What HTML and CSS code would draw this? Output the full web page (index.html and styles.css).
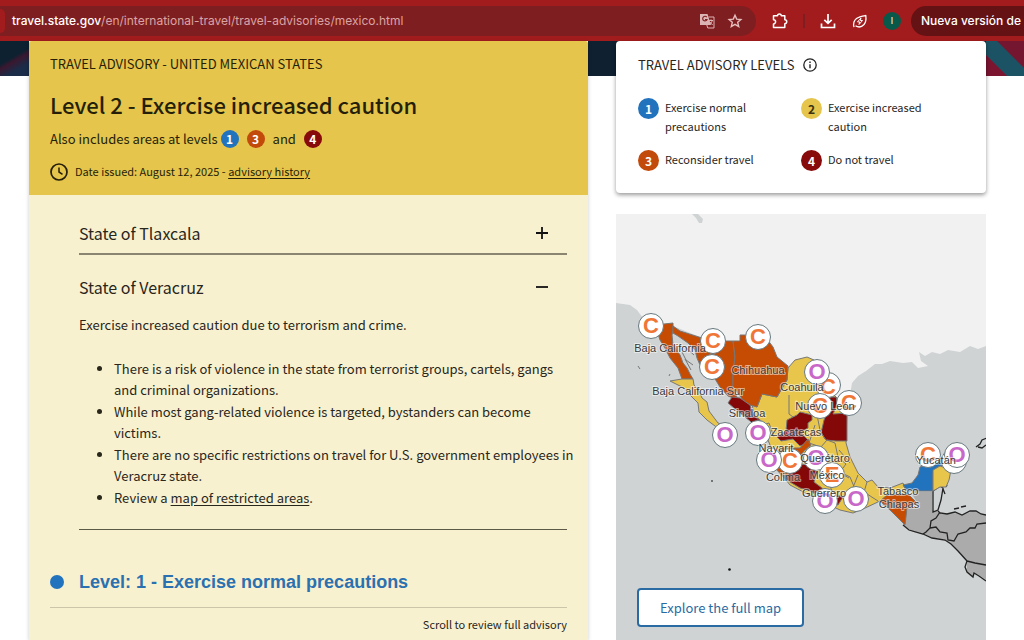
FILE: index.html
```html
<!DOCTYPE html>
<html lang="en">
<head>
<meta charset="utf-8">
<meta name="viewport" content="width=device-width, initial-scale=1">
<title>Mexico Travel Advisory</title>
<link rel="stylesheet" href="styles.css">
</head>
<body>
<header class="browser">
  <div class="omnibox">
    <span class="site-chip"></span>
    <p class="url"><strong>travel.state.gov</strong>/en/international-travel/travel-advisories/mexico.html</p>
    <button class="icon-btn" aria-label="Translate this page">
      <svg width="16" height="16" viewBox="0 0 16 16"><path d="M1 1h7.500l3.500 11H1z" fill="#dcb4b4"/><path d="M7.800 4.200a2.300 2.300 0 1 0 .3 2.300H6" fill="none" stroke="#7f1e20" stroke-width="1.100"/><path d="M9.500 4H15v11H8.800L7.800 12M10 7.500h4M12 6.300v1.200M13.200 7.500c-.4 2-1.600 3-3 4M10.800 9l2.800 3" fill="none" stroke="#dcb4b4" stroke-width="1"/></svg>
    </button>
    <button class="icon-btn" aria-label="Bookmark this page">
      <svg width="16" height="16" viewBox="0 0 16 16"><path d="M8 2.200l1.700 3.900 4.200.4-3.200 2.800 1 4.200L8 11.300l-3.700 2.200 1-4.200-3.200-2.800 4.200-.4z" fill="none" stroke="#e6bfbf" stroke-width="1.400"/></svg>
    </button>
  </div>
  <div class="tools">
    <button class="icon-btn" aria-label="Extensions">
      <svg width="18" height="18" viewBox="0 0 18 18"><path d="M2.500 3.800h4a1.900 1.900 0 0 1 3.800 0h3.500v4a1.900 1.900 0 0 1 0 3.900v3.800H2.500v-3.600a2.100 2.100 0 0 0 0-4.200z" fill="none" stroke="#fff" stroke-width="1.500" stroke-linejoin="round"/></svg>
    </button>
    <span class="divider"></span>
    <button class="icon-btn" aria-label="Downloads">
      <svg width="18" height="18" viewBox="0 0 18 18"><path d="M9 2v9M5.300 7.800L9 11.400l3.700-3.600M2.500 11.500v4h13v-4" fill="none" stroke="#fff" stroke-width="1.700"/></svg>
    </button>
    <button class="icon-btn" aria-label="Energy saver">
      <svg width="18" height="18" viewBox="0 0 18 18"><path d="M3 15.200c-1-3.700 0-6.700 2.500-8.700C8 4.500 11.500 4 14.800 3.500c.4 3.300 0 7-1.800 9-2.500 2.700-6 2.900-8.500 1.200" fill="none" stroke="#fff" stroke-width="1.300" stroke-linejoin="round"/><path d="M10 6L6.500 9.900h2.200L8 12.500l3.500-4H9.300z" fill="none" stroke="#fff" stroke-width="1" stroke-linejoin="round"/></svg>
    </button>
    <button class="avatar" aria-label="Profile">I</button>
  </div>
  <button class="update">Nueva versión de Chrome disponible</button>
</header>

<main class="page">
  <article class="advisory">
    <header class="advisory-head">
      <p class="eyebrow">TRAVEL ADVISORY - UNITED MEXICAN STATES</p>
      <h1>Level 2 - Exercise increased caution</h1>
      <p class="also">Also includes areas at levels <span class="dot l1">1</span> <span class="dot l3">3</span> <span>and</span> <span class="dot l4">4</span></p>
      <p class="issued">
        <svg width="18" height="18" viewBox="0 0 18 18"><circle cx="9" cy="9" r="8" fill="none" stroke="#251f0a" stroke-width="1.700"/><path d="M9 4.500V9l3.500 2.300" fill="none" stroke="#251f0a" stroke-width="1.500"/></svg>
        <span>Date issued: August 12, 2025 - <a href="#history">advisory history</a></span>
      </p>
    </header>
    <div class="advisory-body">
      <section class="states">
        <h2><button class="state ruled" aria-expanded="false">State of Tlaxcala
          <svg width="14" height="14" viewBox="0 0 14 14"><path d="M1 7h12M7 1v12" stroke="#111" stroke-width="1.800"/></svg></button></h2>
        <h2><button class="state" aria-expanded="true">State of Veracruz
          <svg width="14" height="14" viewBox="0 0 14 14"><path d="M1 7h12" stroke="#111" stroke-width="1.800"/></svg></button></h2>
        <div class="detail">
          <p>Exercise increased caution due to terrorism and crime.</p>
          <ul>
            <li>There is a risk of violence in the state from terrorist groups, cartels, gangs and criminal organizations.</li>
            <li>While most gang-related violence is targeted, bystanders can become victims.</li>
            <li>There are no specific restrictions on travel for U.S. government employees in Veracruz state.</li>
            <li>Review a <a href="#restricted">map of restricted areas</a>.</li>
          </ul>
        </div>
      </section>
      <h2 class="level">Level: 1 - Exercise normal precautions</h2>
      <p class="scroll">Scroll to review full advisory</p>
    </div>
  </article>

  <aside class="side">
    <section class="levels">
      <h2>TRAVEL ADVISORY LEVELS
        <svg width="14" height="14" viewBox="0 0 14 14"><circle cx="7" cy="7" r="6.200" fill="none" stroke="#222" stroke-width="1.300"/><path d="M7 6.200v4M7 3.500v1.500" stroke="#222" stroke-width="1.400"/></svg>
      </h2>
      <ul class="legend">
        <li><span class="dot big l1">1</span>Exercise normal precautions</li>
        <li><span class="dot big l2">2</span>Exercise increased caution</li>
        <li><span class="dot big l3">3</span>Reconsider travel</li>
        <li><span class="dot big l4">4</span>Do not travel</li>
      </ul>
    </section>
    <section class="map">
      <svg class="map-art" viewBox="616 214 370 426" preserveAspectRatio="xMidYMin slice" role="img" aria-label="Advisory map of Mexico">
        <path class="usa" d="M616 214H986V346L978 349 970 346 960 352 948 350 940 354 932 352 925 356 919 352 921 361 928 366 918 368 912 362 903 363 890 361 882 364 875 364 866 371 858 376 852 383 850 395 848 414 827 420 800 400 780 370 740 345 700 337 673 326 655 325 643 318 637 310 630 305 616 303Z"/>
        <path class="sea-bit" d="M692 214l4 4 3 5 3 0 1-4-5-5z"/>
        <g class="foreign">
          <path d="M911 492H932V510L940 512 947 514 957 513 962 515 973 511 986 515V580L979 575 974 573 973 577 967 572 967 561 958 551 951 544 945 540 934 538 923 534 913 532 903 525 905 517 908 508 920 508Z"/>
        </g>
        <g class="borders">
          <path d="M933 491L940 486 943 488 941 500 938 510 933 512V491M938 511L940 513 947 514 955 512 962 515 970 511 976 511 981 514 986 515M903 525L909 530 923 534 932 538 945 540 951 544 958 551 967 561 965 567 967 572 973 577 974 573 979 576 986 581M940 512L936 518 931 521 930 528 926 532 923 534M930 528L936 527 940 532 947 533 948 540 954 541 958 534 966 532 970 528 975 528 977 524 986 523M967 561L975 563 986 565M976 447l4-3 2-4 5-2m-9 9l4 1 4-3M954 509l5-1m2-1l5-1M943 489l2 5m1-7l1-2"/>
        </g>
        <g class="states-art">
          <path class="a2" d="M788 368L795 360 807 357 814 360 822 375 829 385 834 395 847 408 846 443 850 457 858 473 867 482 872 480 878 487 890 488 903 483 906 492 910 496 887 498 880 501 863 509 853 513 840 510 815 498 790 485 778 470 772 450 768 440 757 423 752 405 757 407 762 394 777 397 787 380Z"/>
          <path class="a3" d="M655 325L673 323 673 331 672 335 673 345 680 355 683 363 687 368 690 374 693 379 682 379 678 368 670 358 665 348 660 340Z"/>
          <path class="a3" d="M673 326L680 331 702 338 723 341 733 341 735 357 733 372 733 387 738 400 728 396 720 387 712 374 704 371 700 365 697 358 695 350 688 343 678 336 673 333Z"/>
          <path class="a3" d="M733 341H740V335H764L773 347 777 357 788 366 787 380 782 388 777 397 762 394 757 407 750 405 743 400 733 387 733 372 735 357Z"/>
          <path class="a2" d="M670 381L682 379 693 379 694 385 699 391 702 398 707 402 709 411 718 423 724 425 719 429 707 420 699 412 698 403 690 395 684 388Z"/>
          <path class="a4" d="M732 397L740 398 750 405 753 414 766 425 760 431 750 421 740 413 728 403Z"/>
          <path class="a4" d="M787 420L797 415 800 412 812 415 812 420 808 423 808 428 801 432 805 437 810 442 800 446 793 439 781 441 777 437 786 431Z"/>
          <path class="a4" d="M828 397l8 0 2 6-5 11 14-1v28h-11l-10-1-5-7 3-13 4-10z"/>
          <path class="a3" d="M771 455L785 448 800 448 808 439 811 445 803 452 800 466 786 480 776 469Z"/>
          <path class="a4" d="M785 479L795 465 809 464 817 472 814 482 826 491 843 497 838 505 824 500 810 491 800 488Z"/>
          <path class="a3" d="M880 501L887 495 908 494 917 503 907 508 905 525 890 510Z"/>
          <path class="a1" d="M903 485L912 483 918 475 920 467 931 463 948 454 950 463 938 467 933 473V491H907Z"/>
          <path class="a2" d="M933 470L940 466 951 470 949 480 946 487 940 487 933 491Z"/>
          <path class="inner" d="M789 395l0 19 4 3M817 415l3 15 5 9M815 425l-6 18 12 4 6-7 8 3 3 14 8 7-6 8 10 5 5 12M839 450l11 13M835 470l14 8M858 475l-6 15 9 10M753 414l10 11 6-2 5 14M805 449l15 4 8 20M840 478l-10 9 5 8M867 482l-3 10 14 9"/>
          <path class="inner" d="M682 352l4 8 7 5m-9-19l10 9m-9 4l6 11M638 366l2 3m29 7l1-2"/>
        </g>
        <circle cx="729.500" cy="569.500" r="1.300" fill="#111"/><circle cx="712" cy="481" r="1" fill="#555"/>
        <g class="pins">
          <g class="c"><circle cx="828" cy="385" r="12.500"/><text x="828" y="394">C</text></g>
          <g class="o"><circle cx="817" cy="372" r="12.500"/><text x="817" y="379">O</text></g>
          <g class="c"><circle cx="651" cy="326" r="12.500"/><text x="651" y="333">C</text></g>
          <g class="c"><circle cx="713" cy="341" r="12.500"/><text x="713" y="348">C</text></g>
          <g class="c"><circle cx="712" cy="367" r="12.500"/><text x="712" y="374">C</text></g>
          <g class="c"><circle cx="758" cy="337" r="12.500"/><text x="758" y="344">C</text></g>
          <g class="c"><circle cx="820" cy="406" r="12.500"/><text x="820" y="413">C</text></g>
          <g class="c"><circle cx="849" cy="403" r="12.500"/><text x="849" y="410">C</text></g>
          <g class="o"><circle cx="725" cy="435" r="12.500"/><text x="725" y="442">O</text></g>
          <g class="o"><circle cx="758" cy="433" r="12.500"/><text x="758" y="440">O</text></g>
          <g class="c"><circle cx="790" cy="461" r="12.500"/><text x="790" y="468">C</text></g>
          <g class="o"><circle cx="769" cy="460" r="12.500"/><text x="769" y="467">O</text></g>
          <g class="o"><circle cx="816" cy="458" r="12.500"/><text x="816" y="465">O</text></g>
          <g class="c"><circle cx="832" cy="475" r="12.500"/><text x="832" y="482">E</text></g>
          <g class="o"><circle cx="825" cy="501" r="12.500"/><text x="825" y="508">O</text></g>
          <g class="o"><circle cx="856" cy="499" r="12.500"/><text x="856" y="506">O</text></g>
          <g class="c"><circle cx="928" cy="455" r="12.500"/><text x="928" y="462">C</text></g>
          <g class="o"><circle cx="954" cy="461" r="12.500"/></g>
          <g class="o"><circle cx="957" cy="455" r="12.500"/><text x="957" y="462">O</text></g>
        </g>
        <g class="names">
          <text x="670" y="352">Baja California</text><text x="698" y="395">Baja California Sur</text>
          <text x="758" y="374">Chihuahua</text><text x="747" y="417">Sinaloa</text>
          <text x="802" y="391">Coahuila</text><text x="825" y="410">Nuevo León</text>
          <text x="796" y="436">Zacatecas</text><text x="776" y="452">Nayarit</text>
          <text x="825" y="462">Querétaro</text><text x="827" y="479">México</text>
          <text x="783" y="481">Colima</text><text x="824" y="497">Guerrero</text>
          <text x="898" y="495">Tabasco</text><text x="899" y="508">Chiapas</text>
          <text x="936" y="464">Yucatán</text>
        </g>
      </svg>
      <a class="explore" href="#map">Explore the full map</a>
    </section>
  </aside>
</main>
</body>
</html>
```
FILE: styles.css
```css
* { box-sizing: border-box; }
body {
  margin: 0;
  min-height: 100vh;
  display: flex;
  flex-direction: column;
  overflow-x: hidden;
  background: #fff;
  color: #29261c;
  font: 13px/21px "Noto Sans CJK SC", "Noto Sans", sans-serif;
}
h1, h2, p, ul { margin: 0; font-weight: 400; }
button { border: 0; background: none; padding: 0; color: inherit; font: inherit; }
a { color: inherit; text-underline-offset: 2px; }
svg { display: block; flex: none; }

.browser {
  display: flex;
  align-items: center;
  height: 41px;
  overflow: hidden;
  background: #a31c1d;
  color: #fff;
  font: 12px/16px Inter, "Liberation Sans", sans-serif;
}
.omnibox {
  display: flex;
  align-items: center;
  gap: 12px;
  flex: 0 0 756px;
  height: 30px;
  padding-right: 13px;
  border-radius: 0 15px 15px 0;
  background: #7f1e20;
}
.site-chip { width: 5px; height: 24px; margin-right: -5px; border-radius: 0 12px 12px 0; background: #a31c1d; }
.url { flex: 1; margin-left: -5px; padding-left: 5px; color: #dba4a5; font-size: 12px; white-space: nowrap; }
.url strong { color: #fff; font-weight: 500; }
.tools { display: flex; align-items: center; gap: 14px; padding: 0 10px 0 15px; }
.divider { width: 2px; height: 14px; background: #7f1e20; }
.avatar { width: 18px; height: 18px; border-radius: 50%; background: #08594a; font-size: 9px; }
.update {
  flex: none;
  height: 30px;
  padding: 0 14px 0 10px;
  border-radius: 15px;
  background: #651214;
  font-weight: 500;
  white-space: nowrap;
}

.page {
  flex: 1;
  display: grid;
  grid-template-columns: 559fr 370fr;
  gap: 28px;
  padding: 0 38px 0 29px;
  background:
    linear-gradient(45deg, #7b1530 0 28%, #1c5364 30% 62%, #741630 64%) right top / 38px 35px no-repeat,
    linear-gradient(150deg, #0d2130 0 45%, #3a1830 55%, #1a2c48 75%) left top / 29px 35px no-repeat,
    linear-gradient(#0f2031, #0f2031) left top / 100% 35px no-repeat,
    #fff;
}
.advisory { display: flex; flex-direction: column; background: #f8f1cf; box-shadow: 0 1px 4px #0003; }
.advisory-head { padding: 12px 21px 13px; border-radius: 3px 3px 0 0; background: #e5c54b; color: #251f0a; }
.eyebrow { line-height: 22px; }
h1 { margin-top: 12px; font-size: 22px; font-weight: 500; line-height: 34px; }
.also { display: flex; align-items: center; gap: 8px; margin-top: 7px; }
.also > .l1 { margin-left: -5px; }
.issued { display: flex; align-items: center; gap: 7px; margin-top: 12px; font-size: 11px; }
.dot {
  display: grid;
  place-items: center;
  flex: none;
  width: 18px;
  height: 18px;
  border-radius: 50%;
  color: #fff;
  font-size: 12px;
  font-weight: 700;
  line-height: 18px;
}
.dot.big { width: 21px; height: 21px; line-height: 21px; }
.l1 { background: #2273bd; }
.l2 { background: #e5c54b; }
.dot.l2 { color: #3a3212; }
.l3 { background: #c24a0a; }
.l4 { background: #880b0b; }

.advisory-body { flex: 1; padding: 26px 21px 5px; }
.states { margin-left: 29px; border-bottom: 1px solid #5d5947; padding-bottom: 20px; }
.state {
  display: flex;
  align-items: center;
  justify-content: space-between;
  width: 100%;
  padding: 0 18px 8px 0;
  font-size: 16px;
  line-height: 24px;
}
.state.ruled { border-bottom: 2px solid #8a8570; margin-bottom: 20px; }
.detail { padding-top: 7px; }
.detail ul { margin: 23px -12px 0 0; padding-left: 35px; }
.detail li { margin-bottom: 1px; }
.level {
  display: flex;
  align-items: center;
  gap: 15px;
  margin-top: 39px;
  padding-bottom: 12px;
  border-bottom: 1px solid #cbc6aa;
  color: #2b70b0;
  font: bold 18px/26px "Liberation Sans", Arial, sans-serif;
}
.level::before { content: ""; width: 14px; height: 14px; border-radius: 50%; background: #2273bd; }
.scroll { margin-top: 6px; font-size: 11px; text-align: right; }

.side { display: flex; flex-direction: column; gap: 21px; min-width: 0; }
.levels {
  padding: 13px 22px 22px;
  border-radius: 4px;
  background: #fff;
  box-shadow: 0 2px 4px #0006;
}
.levels h2 { display: flex; align-items: center; gap: 8px; font-size: 13px; line-height: 22px; }
.legend { display: grid; grid-template-columns: 1fr 1fr; gap: 14px 0; margin-top: 22px; padding: 0; list-style: none; font-size: 11px; line-height: 19px; }
.legend li { display: flex; align-items: flex-start; gap: 6px; padding-right: 36px; }

.map { position: relative; flex: 1; min-height: 426px; overflow: hidden; background: #cfd3d4; }
.map-art { width: 100%; height: 100%; }
.usa { fill: #f1f1f1; }
.sea-bit { fill: #cfd3d4; }
.foreign { fill: #ababab; }
.borders { fill: none; stroke: #222; stroke-width: 1.3; }
.states-art { stroke: #777; stroke-width: 1; }
.a1 { fill: #2273bd; }
.a2 { fill: #e8c64c; }
.a3 { fill: #c64b03; }
.a4 { fill: #850808; }
.inner { fill: none; }
.pins circle { fill: #fff; stroke: #67787e; stroke-width: 1; }
.pins text { font: bold 22px "Liberation Sans", Arial, sans-serif; text-anchor: middle; }
.pins .c { fill: #ef7637; }
.pins .o { fill: #c868c8; }
.names text {
  font: 11px "Liberation Sans", Arial, sans-serif;
  text-anchor: middle;
  fill: #3a3a3a;
  stroke: #ffffff88;
  stroke-width: 2px;
  paint-order: stroke;
}
.explore {
  position: absolute;
  left: 21px;
  bottom: 13px;
  padding: 7px 21px;
  border: 2px solid #2a6ba3;
  border-radius: 4px;
  background: #fff;
  color: #2a6ba3;
  font-size: 13px;
  text-decoration: none;
}
```
